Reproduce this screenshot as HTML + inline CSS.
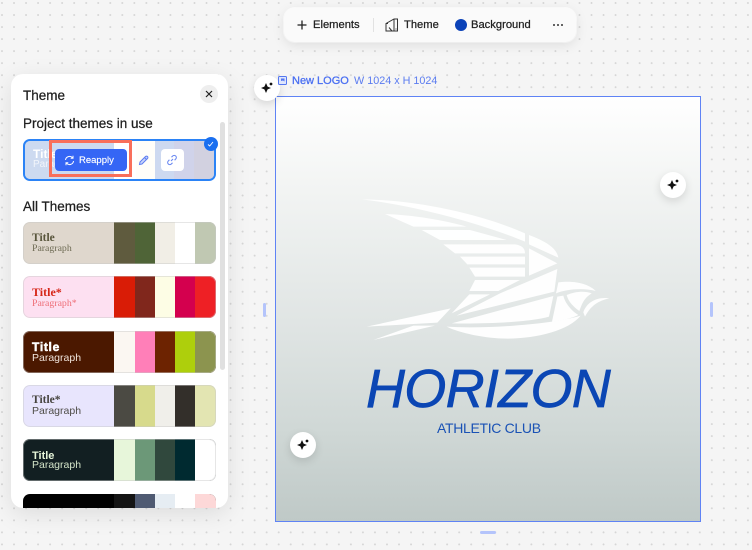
<!DOCTYPE html>
<html><head><meta charset="utf-8">
<style>
html,body{margin:0;padding:0;width:752px;height:550px;overflow:hidden}
body{position:relative;background-color:#f5f5f5;background-image:radial-gradient(circle at 1px 1px,#d6d6d6 0.8px,transparent 1.1px);background-size:12.04px 12.04px;background-position:1px 2px;font-family:"Liberation Sans",sans-serif;color:#1f1f1f}
.a{position:absolute}
.t{position:absolute;white-space:nowrap;-webkit-text-stroke:.25px currentColor}
.card{position:absolute;left:23px;width:193px;height:42px;border-radius:7px;overflow:hidden;box-sizing:border-box}
.card:not(.sel)::after{content:"";position:absolute;inset:0;border-radius:7px;box-shadow:inset 0 0 0 1px rgba(200,200,200,.45)}
.card i{position:absolute;top:0;height:100%;display:block}
.card .s1{left:91px;width:20.5px}.card .s2{left:111.5px;width:20.5px}.card .s3{left:132px;width:19.5px}.card .s4{left:151.5px;width:20.5px}.card .s5{left:172px;width:21px}
.card b,.card span{position:absolute;left:9px;white-space:nowrap}
.se{font-family:"Liberation Serif",serif}
.spark{position:absolute;width:26px;height:26px;border-radius:50%;background:#fff;box-shadow:0 3px 9px rgba(0,0,0,.13)}
.spark svg{position:absolute;left:5px;top:5px}
</style></head><body>

<!-- toolbar -->
<div class="a" style="left:284px;top:8px;width:292px;height:34px;border-radius:11px;background:#fafafa;box-shadow:0 3px 12px rgba(0,0,0,.1),0 0 0 1px #fff"></div>
<svg class="a" style="left:296px;top:19px" width="12" height="12" viewBox="0 0 12 12"><path d="M6 1.500v9M1.500 6h9" stroke="#222" stroke-width="1.300" fill="none"/></svg>
<div class="t" style="left:313px;top:18px;font-size:11.200px;line-height:14px">Elements</div>
<div class="a" style="left:373px;top:18px;width:1px;height:14px;background:#e2e2e2"></div>
<svg class="a" style="left:385px;top:18px" width="14" height="14" viewBox="0 0 14 14"><path d="M1 5.500L9 1h3.500v12H1zM9 1v12M1 5.500l2 0" stroke="#333" stroke-width="1" fill="none"/><path d="M4 9.500l3 3.500M11 10.500v1" stroke="#333" stroke-width="1" fill="none"/></svg>
<div class="t" style="left:404px;top:18px;font-size:11.200px;line-height:14px">Theme</div>
<div class="a" style="left:455px;top:19px;width:12px;height:12px;border-radius:50%;background:#0b42b8"></div>
<div class="t" style="left:471px;top:18px;font-size:11.200px;line-height:14px">Background</div>
<svg class="a" style="left:552px;top:22px" width="12" height="6" viewBox="0 0 12 6"><circle cx="2" cy="3" r="1" fill="#333"/><circle cx="6" cy="3" r="1" fill="#333"/><circle cx="10" cy="3" r="1" fill="#333"/></svg>

<!-- canvas -->
<div class="a" style="left:275px;top:96px;width:424px;height:424px;border:1px solid #5f83f5;background:linear-gradient(180deg,#ffffff 0%,#f2f4f3 22%,#dfe4e3 55%,#d0d8d6 78%,#bfc9c7 100%)"></div>
<svg class="a" style="left:350px;top:185px" width="270" height="165" viewBox="0 0 810 495">
<g fill="#fff" fill-opacity=".95">
<path d="M35 43C210 45 400 90 525 145V170C400 118 200 62 35 43Z"/>
<path d="M105 87C190 90 280 105 350 125H190Z"/>
<path d="M215 135H360L470 165H270Z"/>
<path d="M280 178H495Q525 182 525 205H315Z"/>
<path d="M330 215H525V238H352Z"/>
<path d="M358 248H525V275H375Z"/>
<path d="M375 285H510L445 318H358Z"/>
<path d="M537 150C590 170 620 190 625 218L537 178Z"/>
<path d="M537 190L622 235L537 272Z"/>
<path d="M358 328H420L305 385Z"/>
<path d="M622 252L613 320L320 392L450 325Z"/>
<path d="M610 333L597 395C540 412 400 417 305 415Z"/>
<path d="M625 292C680 285 720 300 737 318C700 308 650 312 618 325Z"/>
<path d="M622 335L640 332C645 355 665 378 685 390C665 400 630 408 606 410Z"/>
<path d="M650 330C680 318 705 318 725 325C700 340 695 360 688 378C670 365 655 350 650 330Z"/>
<path d="M700 382C710 352 740 335 778 340C745 347 722 362 705 395Z"/>
<path d="M290 425C400 432 600 420 692 392C650 445 520 470 420 458C370 452 320 440 290 425Z"/>
<path d="M50 425L302 370L262 413Z"/>
<path d="M70 465L190 422H255Z"/>
</g></svg>
<div class="a" style="left:366px;top:358px;font-size:54px;line-height:62px;font-style:italic;color:#0b46b4;letter-spacing:-.7px;white-space:nowrap;-webkit-text-stroke:.7px #0b46b4">HORIZON</div>
<div class="a" style="left:437px;top:420px;font-size:14px;line-height:17px;color:#1a52b5;white-space:nowrap;letter-spacing:-.32px">ATHLETIC CLUB</div>

<!-- handles -->
<div class="a" style="left:263px;top:303px;width:3px;height:14px;border-radius:2px;background:#b4c4fb"></div>
<div class="a" style="left:710px;top:302px;width:3px;height:15px;border-radius:2px;background:#b4c4fb"></div>
<div class="a" style="left:480px;top:531px;width:16px;height:3px;border-radius:2px;background:#b4c4fb"></div>

<!-- sparks -->
<div class="spark" style="left:254px;top:75px"><svg width="16" height="16" viewBox="0 0 16 16"><path d="M7 3L8.600 6.600 12 8 8.600 9.400 7 13 5.400 9.400 2 8 5.400 6.600Z" fill="#111"/><circle cx="12" cy="4" r="1.400" fill="#111"/></svg></div>
<div class="spark" style="left:660px;top:172px"><svg width="16" height="16" viewBox="0 0 16 16"><path d="M7 3L8.600 6.600 12 8 8.600 9.400 7 13 5.400 9.400 2 8 5.400 6.600Z" fill="#111"/><circle cx="12" cy="4" r="1.400" fill="#111"/></svg></div>
<div class="spark" style="left:290px;top:432px"><svg width="16" height="16" viewBox="0 0 16 16"><path d="M7 3L8.600 6.600 12 8 8.600 9.400 7 13 5.400 9.400 2 8 5.400 6.600Z" fill="#111"/><circle cx="12" cy="4" r="1.400" fill="#111"/></svg></div>

<!-- label -->
<svg class="a" style="left:278px;top:76px" width="9" height="9" viewBox="0 0 9 9"><rect x=".5" y=".5" width="8" height="8" rx="1" fill="#dfe6fd" stroke="#5477f0"/><path d="M3 2.500h3.500v3L5 4.500 3 5z" fill="#5477f0"/></svg>
<div class="t" style="left:292px;top:74px;font-size:11px;line-height:14px;color:#4a6ff2;-webkit-text-stroke:.3px #4a6ff2">New LOGO</div>
<div class="a" style="left:354px;top:74px;font-size:10.800px;line-height:14px;color:#5b7cf0;white-space:nowrap">W 1024 x H 1024</div>

<!-- panel -->
<div class="a" style="left:11px;top:74px;width:217px;height:434px;border-radius:12px;background:#fff;box-shadow:0 6px 24px rgba(0,0,0,.1);overflow:hidden">
  <div class="t" style="left:12px;top:14px;font-size:13.500px;line-height:16px">Theme</div>
  <div class="a" style="left:189px;top:11px;width:18px;height:18px;border-radius:50%;background:#eeeeee"></div>
  <svg class="a" style="left:194px;top:16px" width="8" height="8" viewBox="0 0 8 8"><path d="M1 1l6 6M7 1l-6 6" stroke="#222" stroke-width="1.200"/></svg>
  <div class="t" style="left:12px;top:42px;font-size:13.500px;line-height:16px">Project themes in use</div>
  <div class="t" style="left:12px;top:125px;font-size:13.500px;line-height:16px">All Themes</div>
  <div class="a" style="left:209px;top:48px;width:5px;height:248px;border-radius:3px;background:#e0e0e0"></div>
</div>

<!-- selected card -->
<div class="card sel" style="top:139px;border:2px solid #2b83f6;background:#cddaf0">
  <i style="left:0;width:89px;background:#cddaf0"></i>
  <i style="left:89px;width:22px;background:#fff"></i><i style="left:111px;width:19px;background:#fffef9"></i>
  <i style="left:130px;width:19px;background:#cdd9f0"></i><i style="left:149px;width:20px;background:#d0d3ea"></i><i style="left:169px;width:20px;background:#d2d1e0"></i>
  <b style="left:8px;top:6px;font-size:12px;line-height:14px;color:#fff">Title</b>
  <span style="left:8px;top:18px;font-size:10px;line-height:12px;color:#f2f5fb">Paragraph</span>
</div>
<div class="a" style="left:55px;top:149px;width:72px;height:22px;border-radius:4px;background:#3566f5"></div>
<svg class="a" style="left:64px;top:155px" width="11" height="11" viewBox="0 0 11 11"><path d="M1.500 5A4 4 0 0 1 8.500 2.800M9.500 6A4 4 0 0 1 2.500 8.200" stroke="#fff" stroke-width="1" fill="none"/><path d="M9 .8v2.400H6.700M2 10.200V7.800h2.300" stroke="#fff" stroke-width="1" fill="none"/></svg>
<div class="t" style="left:79px;top:154px;font-size:9.500px;line-height:14px;color:#fff;-webkit-text-stroke:.15px #fff">Reapply</div>
<div class="a" style="left:49px;top:140px;width:83px;height:37px;box-sizing:border-box;border:3px solid #f96f5a"></div>
<svg class="a" style="left:138px;top:154px" width="12" height="12" viewBox="0 0 12 12"><path d="M2 8L7.500 2.500a1.400 1.400 0 0 1 2 2L4 10 1.500 10.500Z" fill="#c9d5fb" stroke="#5d7df0" stroke-width="1"/><path d="M6.500 3.500l2 2" stroke="#5d7df0"/></svg>
<div class="a" style="left:161px;top:149px;width:23px;height:22px;border-radius:4px;background:#fff"></div>
<svg class="a" style="left:166px;top:154px" width="12" height="12" viewBox="0 0 12 12"><path d="M5 7l2-2M5.500 3.200l1.200-1.200a2.100 2.100 0 0 1 3 3L8.600 6.200M6.500 8.800L5.300 10a2.100 2.100 0 0 1-3-3L3.400 5.800" stroke="#6a88f1" stroke-width="1.100" fill="none"/></svg>
<div class="a" style="left:203.500px;top:137px;width:14px;height:14px;border-radius:50%;background:#1a6ff0"></div>
<svg class="a" style="left:206px;top:140px" width="9" height="8" viewBox="0 0 9 8"><path d="M2 4.500l1.700 1.500 3.300-4" stroke="#fff" stroke-width=".9" fill="none"/></svg>

<!-- theme cards -->
<div class="card" style="top:222px;background:#dfd7cd">
  <i class="s1" style="background:#5f5b3e"></i><i class="s2" style="background:#4f6437"></i><i class="s3" style="background:#f1eee6"></i><i class="s4" style="background:#fff"></i><i class="s5" style="background:#c0c8b2"></i>
  <b class="se" style="top:10px;font-size:11.500px;line-height:13px;color:#59563c">Title</b>
  <span class="se" style="top:21px;font-size:9.800px;line-height:12px;color:#6f6c55">Paragraph</span>
</div>
<div class="card" style="top:276px;background:#fde0f1">
  <i class="s1" style="background:#d91c06"></i><i class="s2" style="background:#80271c"></i><i class="s3" style="background:#fdfde5"></i><i class="s4" style="background:#d4004e"></i><i class="s5" style="background:#ee2025"></i>
  <b class="se" style="top:10px;font-size:12px;line-height:13px;color:#d6281a">Title*</b>
  <span class="se" style="top:22px;font-size:9.800px;line-height:12px;color:#ee6f78">Paragraph*</span>
</div>
<div class="card" style="top:331px;background:#4b1800">
  <i class="s1" style="background:#fbf7f2"></i><i class="s2" style="background:#ff7fb8"></i><i class="s3" style="background:#6d2301"></i><i class="s4" style="background:#aecf0c"></i><i class="s5" style="background:#8c944f"></i>
  <b style="top:10px;font-size:12px;line-height:13px;color:#fff;-webkit-text-stroke:.5px #fff;letter-spacing:.7px">Title</b>
  <span style="top:21px;font-size:10.500px;line-height:12px;color:#efe3da">Paragraph</span>
</div>
<div class="card" style="top:385px;background:#e8e5fd">
  <i class="s1" style="background:#4b4a43"></i><i class="s2" style="background:#d7da8c"></i><i class="s3" style="background:#f0efea"></i><i class="s4" style="background:#332f2a"></i><i class="s5" style="background:#e3e5b2"></i>
  <b class="se" style="top:9px;font-size:11.500px;line-height:13px;color:#46443f">Title*</b>
  <span style="top:20px;font-size:10.500px;line-height:12px;color:#4f4d48">Paragraph</span>
</div>
<div class="card" style="top:439px;background:#121f22">
  <i class="s1" style="background:#e7f6da"></i><i class="s2" style="background:#6c9878"></i><i class="s3" style="background:#30483d"></i><i class="s4" style="background:#002a30"></i><i class="s5" style="background:#fff"></i>
  <b style="top:11px;font-size:11px;line-height:13px;color:#e7f6da">Title</b>
  <span style="top:20px;font-size:10.500px;line-height:12px;color:#d3e4c8">Paragraph</span>
</div>
<div class="a" style="left:23px;top:494px;width:193px;height:14px;overflow:hidden;border-radius:7px 7px 0 0;background:#000">
  <i style="position:absolute;left:91px;width:20.500px;height:100%;background:#141414"></i><i style="position:absolute;left:111.500px;width:20.500px;height:100%;background:#4f5a72"></i><i style="position:absolute;left:132px;width:19.500px;height:100%;background:#e6edf3"></i><i style="position:absolute;left:151.500px;width:20.500px;height:100%;background:#fff"></i><i style="position:absolute;left:172px;width:21px;height:100%;background:#fdd8d8"></i>
</div>
</body></html>
